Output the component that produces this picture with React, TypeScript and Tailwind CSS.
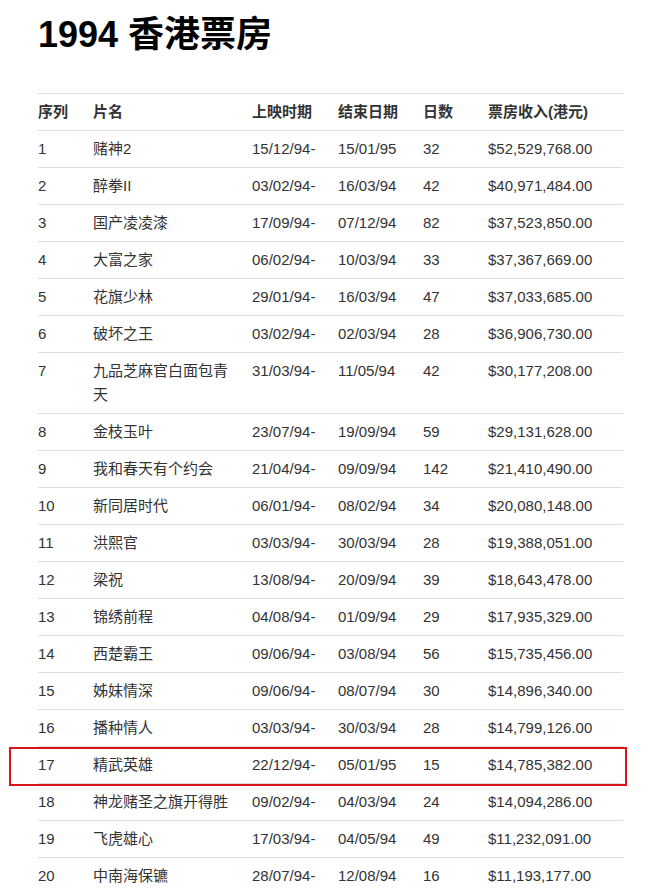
const rows: [string, string, string, string, string, string][] = [
  ['1', '赌神2', '15/12/94-', '15/01/95', '32', '$52,529,768.00'],
  ['2', '醉拳II', '03/02/94-', '16/03/94', '42', '$40,971,484.00'],
  ['3', '国产凌凌漆', '17/09/94-', '07/12/94', '82', '$37,523,850.00'],
  ['4', '大富之家', '06/02/94-', '10/03/94', '33', '$37,367,669.00'],
  ['5', '花旗少林', '29/01/94-', '16/03/94', '47', '$37,033,685.00'],
  ['6', '破坏之王', '03/02/94-', '02/03/94', '28', '$36,906,730.00'],
  ['7', '九品芝麻官白面包青天', '31/03/94-', '11/05/94', '42', '$30,177,208.00'],
  ['8', '金枝玉叶', '23/07/94-', '19/09/94', '59', '$29,131,628.00'],
  ['9', '我和春天有个约会', '21/04/94-', '09/09/94', '142', '$21,410,490.00'],
  ['10', '新同居时代', '06/01/94-', '08/02/94', '34', '$20,080,148.00'],
  ['11', '洪熙官', '03/03/94-', '30/03/94', '28', '$19,388,051.00'],
  ['12', '梁祝', '13/08/94-', '20/09/94', '39', '$18,643,478.00'],
  ['13', '锦绣前程', '04/08/94-', '01/09/94', '29', '$17,935,329.00'],
  ['14', '西楚霸王', '09/06/94-', '03/08/94', '56', '$15,735,456.00'],
  ['15', '姊妹情深', '09/06/94-', '08/07/94', '30', '$14,896,340.00'],
  ['16', '播种情人', '03/03/94-', '30/03/94', '28', '$14,799,126.00'],
  ['17', '精武英雄', '22/12/94-', '05/01/95', '15', '$14,785,382.00'],
  ['18', '神龙赌圣之旗开得胜', '09/02/94-', '04/03/94', '24', '$14,094,286.00'],
  ['19', '飞虎雄心', '17/03/94-', '04/05/94', '49', '$11,232,091.00'],
  ['20', '中南海保镳', '28/07/94-', '12/08/94', '16', '$11,193,177.00'],
];

const headers = ['序列', '片名', '上映时期', '结束日期', '日数', '票房收入(港元)'];

export default function App() {
  return (
    <div
      className="min-h-screen bg-white px-[38px] pt-[15px] text-[#333]"
      style={{ fontFamily: '"Liberation Sans", Arial, "Noto Sans CJK SC", sans-serif' }}
    >
      {/* Title */}
      <h1 className="text-[36px] font-bold leading-[1.1] text-black">1994 香港票房</h1>

      {/* Table */}
      <div className="relative mt-[38px] w-[585px]">
        <table className="w-[585px] table-fixed border-collapse text-[15px] leading-[24px]">
          <colgroup>
            <col className="w-[55px]" />
            <col className="w-[159px]" />
            <col className="w-[86px]" />
            <col className="w-[85px]" />
            <col className="w-[65px]" />
            <col className="w-[135px]" />
          </colgroup>
          <thead>
            <tr className="border-t border-[#ddd]">
              {headers.map((h) => (
                <th key={h} className="py-[6px] pr-[10px] text-left align-top font-bold whitespace-nowrap">
                  {h}
                </th>
              ))}
            </tr>
          </thead>
          <tbody>
            {rows.map((r) => (
              <tr key={r[0]} className="border-t border-[#ddd]">
                <td className="py-[6px] pr-[10px] align-top">{r[0]}</td>
                <td className="py-[6px] pr-[12px] align-top">{r[1]}</td>
                <td className="py-[6px] pr-[6px] align-top whitespace-nowrap">{r[2]}</td>
                <td className="py-[6px] pr-[6px] align-top whitespace-nowrap">{r[3]}</td>
                <td className="py-[6px] pr-[6px] align-top">{r[4]}</td>
                <td className="py-[6px] align-top whitespace-nowrap">{r[5]}</td>
              </tr>
            ))}
          </tbody>
        </table>

        {/* Highlight annotation around row 17 */}
        <div className="pointer-events-none absolute left-[-29px] top-[654px] h-[39px] w-[618px] border-2 border-[#d9141b]" />
      </div>
    </div>
  );
}
